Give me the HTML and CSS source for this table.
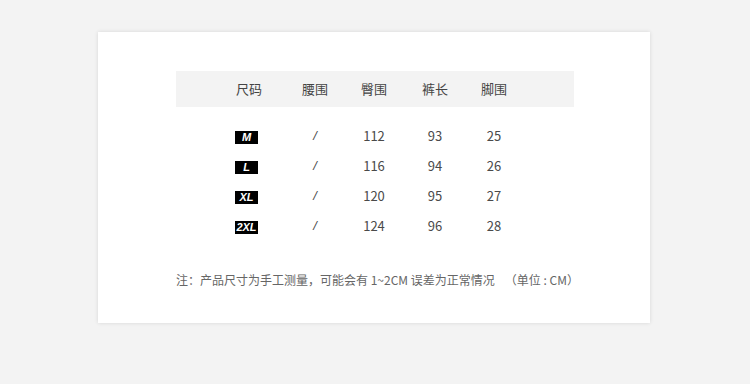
FILE: index.html
```html
<!DOCTYPE html>
<html lang="zh">
<head>
<meta charset="utf-8">
<link rel="stylesheet" href="styles.css">
</head>
<body>
<div class="card">
  <div class="table">
    <div class="row head">
      <div class="c">尺码</div><div class="c">腰围</div><div class="c">臀围</div><div class="c">裤长</div><div class="c">脚围</div>
    </div>
    <div class="row">
      <div class="c"><span class="badge">M</span></div><div class="c slash">/</div><div class="c">112</div><div class="c">93</div><div class="c">25</div>
    </div>
    <div class="row">
      <div class="c"><span class="badge">L</span></div><div class="c slash">/</div><div class="c">116</div><div class="c">94</div><div class="c">26</div>
    </div>
    <div class="row">
      <div class="c"><span class="badge">XL</span></div><div class="c slash">/</div><div class="c">120</div><div class="c">95</div><div class="c">27</div>
    </div>
    <div class="row">
      <div class="c"><span class="badge">2XL</span></div><div class="c slash">/</div><div class="c">124</div><div class="c">96</div><div class="c">28</div>
    </div>
  </div>
  <p class="note">注：产品尺寸为手工测量，可能会有 1~2CM 误差为正常情况<span class="gap"></span>（单位 : CM）</p>
</div>
</body>
</html>
```
FILE: styles.css
```css
html, body {
  margin: 0;
  padding: 0;
}
body {
  background: #f3f3f3;
  width: 750px;
  height: 384px;
  overflow: hidden;
  font-family: "Noto Sans CJK SC", "Noto Sans", sans-serif;
  color: #555;
}
.card {
  margin: 32px 0 0 98px;
  width: 552px;
  height: 291px;
  box-sizing: border-box;
  background: #fff;
  box-shadow: 0 0 4px rgba(0,0,0,0.12);
  padding: 39px 76px 0 78px;
}
.table {
  width: 398px;
}
.row {
  display: grid;
  grid-template-columns: 66px 66px 52px 70px 48px;
  padding-left: 40px;
  height: 30px;
  align-items: center;
  font-size: 13px;
  color: #4a4a4a;
}
.row.head {
  height: 36px;
  background: #f3f3f3;
  margin-bottom: 14px;
  color: #444;
}
.c {
  text-align: center;
  line-height: 16px;
}
.slash {
  font-family: "Liberation Sans", sans-serif;
  font-style: italic;
}
.badge {
  display: inline-block;
  width: 23px;
  height: 13px;
  background: #000;
  color: #fff;
  font-family: "Liberation Sans", Arial, sans-serif;
  font-weight: bold;
  font-style: italic;
  font-size: 11px;
  line-height: 13px;
  text-align: center;
  vertical-align: middle;
  margin-left: -5px;
}
.note {
  margin: 29px 0 0;
  font-size: 12px;
  line-height: 20px;
  color: #666;
  white-space: nowrap;
}
.gap {
  display: inline-block;
  width: 10px;
}
```
